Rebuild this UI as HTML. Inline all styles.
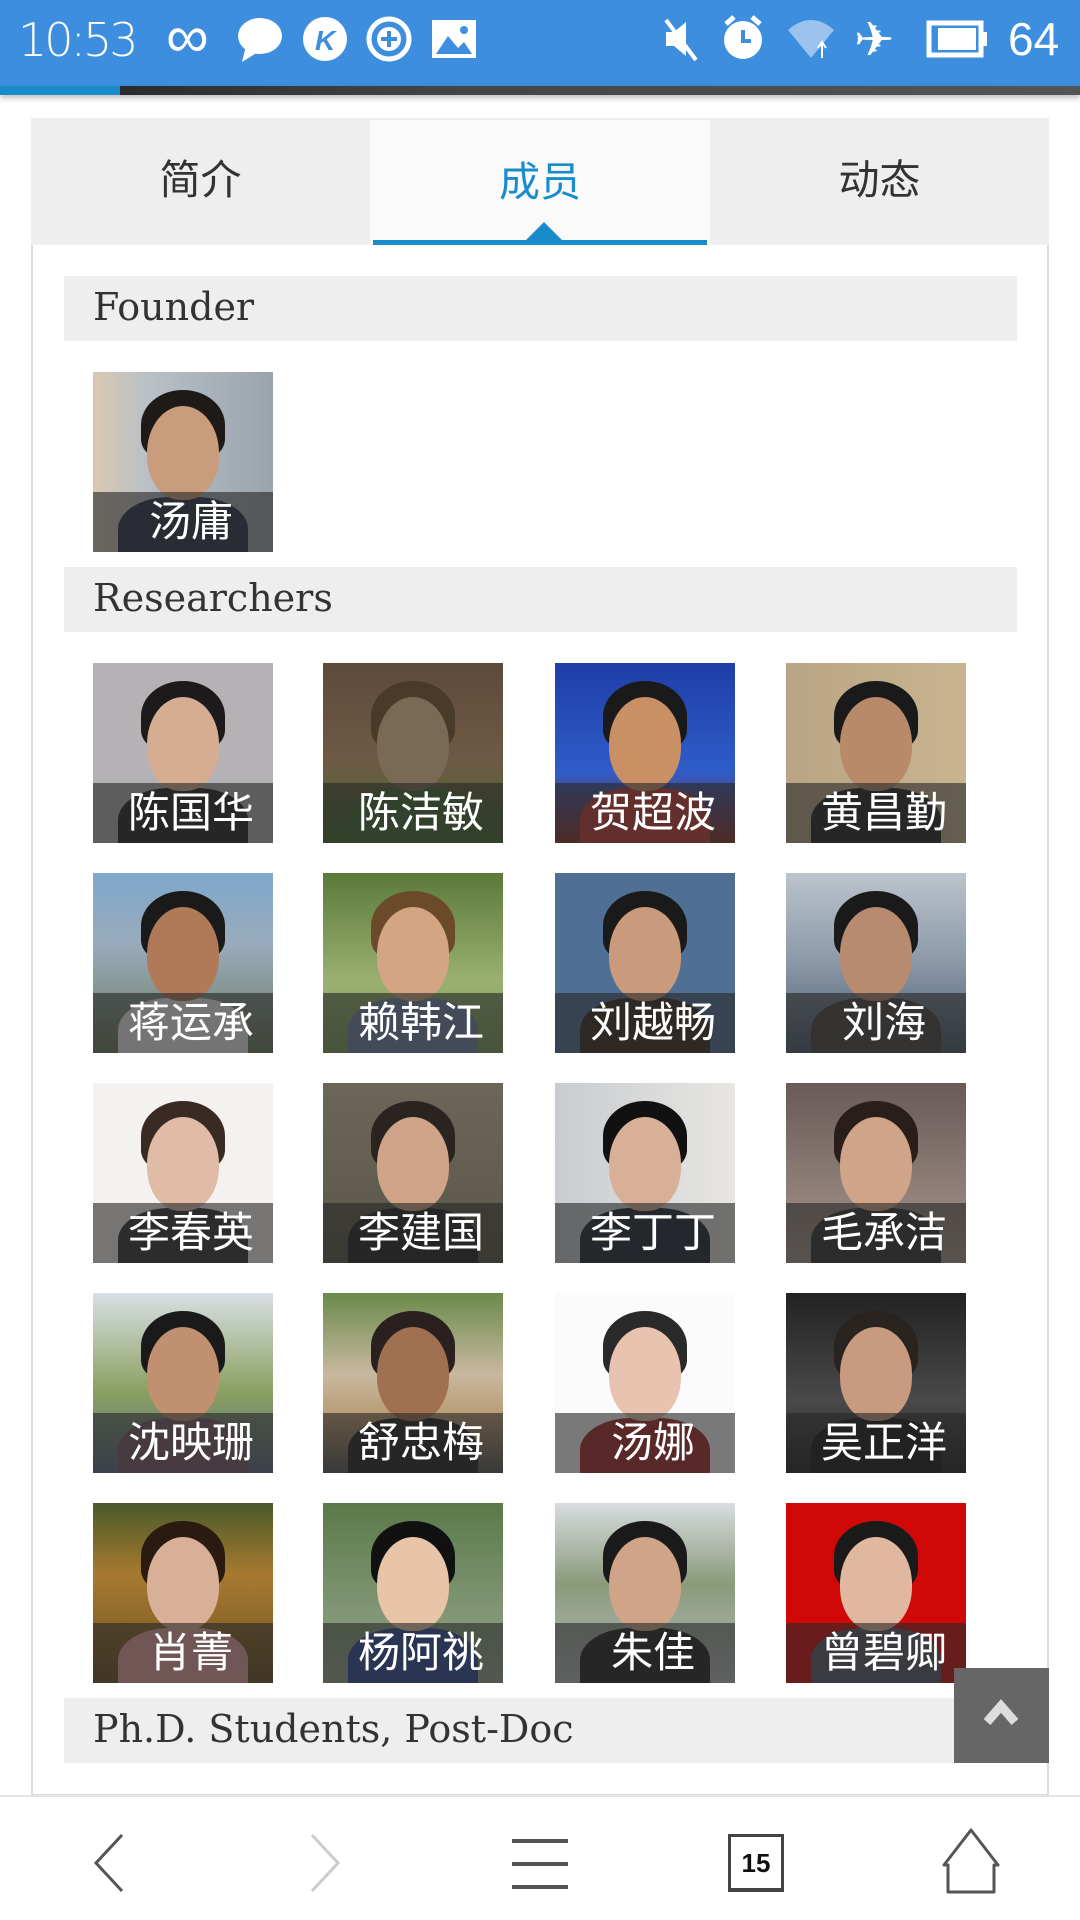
<!DOCTYPE html>
<html><head><meta charset="utf-8"><style>
*{margin:0;padding:0;box-sizing:border-box}
body{width:1080px;height:1920px;background:#fff;position:relative;overflow:hidden;font-family:"Liberation Sans","Noto Sans CJK SC",sans-serif}
.sb{position:absolute;left:0;top:0;width:1080px;height:86px;background:#3d8ede;color:#fff}
.strip{position:absolute;top:86px;left:0;width:1080px;height:9px;background:linear-gradient(90deg,#222,#444 40%,#555);box-shadow:0 3px 6px rgba(0,0,0,.25)}
.strip:before{content:"";position:absolute;left:0;top:0;width:120px;height:9px;background:#1a8ccc}
.tabs{position:absolute;left:31px;top:118px;width:1018px;height:127px;background:#eee}
.tab{position:absolute;top:0;height:127px;font-size:41px;color:#333;text-align:center;line-height:124px}
.act{background:#fafafa;color:#1a8ccc;top:2px;height:125px}
.ul{position:absolute;left:373px;top:240px;width:334px;height:6px;background:#1a8ccc}
.tri{position:absolute;left:526px;top:222px;width:0;height:0;border-left:18px solid transparent;border-right:18px solid transparent;border-bottom:18px solid #1a8ccc}
.panel{position:absolute;left:31px;top:245px;width:1018px;height:1551px;border:2px solid #ddd;border-top:none;background:#fff}
.hd{position:absolute;left:64px;width:953px;height:65px;background:#eee;font-family:"DejaVu Serif","Liberation Serif",serif;font-size:38px;color:#333;padding-left:29px;line-height:62px}
.ph{position:absolute;width:180px;height:180px;overflow:hidden}
.ph .lb{position:absolute;left:0;bottom:0;width:180px;height:60px;background:rgba(40,40,40,.62);color:#fff;font-size:42px;text-align:center;line-height:60px;padding-left:16px}
.ph .head{position:absolute;border-radius:50% 50% 46% 46%}
.ph .hair{position:absolute;border-radius:50% 50% 30% 30%}
.ph .body{position:absolute;border-radius:40% 40% 0 0}
.top{position:absolute;left:954px;top:1668px;width:95px;height:95px;background:#666}
.nav{position:absolute;left:0;top:1795px;width:1080px;height:125px;background:#fff;border-top:2px solid #e4e4e4}
</style></head><body>
<div class="sb">
<div style="position:absolute;left:18px;top:13px;font-size:46px;font-family:'DejaVu Sans','Liberation Sans',sans-serif;font-weight:200;letter-spacing:-3px">10:53</div>
<div style="position:absolute;left:166px;top:2px;font-size:60px">∞</div>
<svg style="position:absolute;left:234px;top:16px" width="50" height="48" viewBox="0 0 50 48"><ellipse cx="26" cy="20" rx="22" ry="18" fill="#fff"/><path d="M12 30 L8 46 L24 36Z" fill="#fff"/></svg>
<svg style="position:absolute;left:302px;top:16px" width="46" height="46"><circle cx="23" cy="23" r="22" fill="#fff"/><text x="13" y="34" font-size="28" font-weight="bold" font-style="italic" fill="#3d8ede" font-family="Liberation Sans">K</text></svg>
<svg style="position:absolute;left:366px;top:16px" width="46" height="46"><circle cx="23" cy="23" r="20" fill="none" stroke="#fff" stroke-width="5"/><circle cx="23" cy="23" r="12" fill="#fff"/><path d="M23 15v16M15 23h16" stroke="#3d8ede" stroke-width="4"/></svg>
<svg style="position:absolute;left:430px;top:18px" width="48" height="42"><rect x="2" y="2" width="44" height="38" fill="#fff"/><path d="M6 36 L18 18 L28 30 L34 24 L42 36Z" fill="#3d8ede"/><circle cx="34" cy="12" r="4" fill="#3d8ede"/></svg>
<svg style="position:absolute;left:662px;top:16px" width="40" height="46"><path d="M4 16h8l12-10v34L12 30H4Z" fill="#fff"/><path d="M4 4 L34 44" stroke="#fff" stroke-width="4"/></svg>
<svg style="position:absolute;left:720px;top:14px" width="46" height="48"><circle cx="23" cy="26" r="19" fill="#fff"/><path d="M23 16v11h8" stroke="#3d8ede" stroke-width="4" fill="none"/><path d="M6 10l8-7M40 10l-8-7" stroke="#fff" stroke-width="5"/></svg>
<svg style="position:absolute;left:786px;top:16px" width="50" height="44"><path d="M2 14 Q25 -6 48 14 L25 42Z" fill="#9cc3ee"/><path d="M36 26v16M32 32l4-6 4 6" stroke="#fff" stroke-width="2" fill="none"/></svg>
<div style="position:absolute;left:854px;top:12px;font-size:48px">✈</div>
<svg style="position:absolute;left:926px;top:20px" width="62" height="38"><rect x="3" y="3" width="52" height="32" fill="none" stroke="#fff" stroke-width="5"/><rect x="12" y="8" width="38" height="22" fill="#fff"/><rect x="56" y="12" width="5" height="14" fill="#fff"/></svg>
<div style="position:absolute;left:1008px;top:12px;font-size:46px">64</div>
</div>
<div class="strip"></div>

<div class="tabs">
<div class="tab" style="left:0;width:339px">简介</div>
<div class="tab act" style="left:339px;width:340px">成员</div>
<div class="tab" style="left:679px;width:339px">动态</div>
</div>
<div class="ul"></div><div class="tri"></div>
<div class="panel"></div>

<div class="hd" style="top:276px">Founder</div>
<div class="hd" style="top:567px">Researchers</div>
<div class="hd" style="top:1698px;width:890px">Ph.D. Students, Post-Doc</div>

<div id="g"></div>
<script>
var P=[
["汤庸",93,372,"linear-gradient(90deg,#d8c8b0,#b9c0c6 30%,#9aa4ad)","#c99c7c","#1e1a18","#2c3448"],
["陈国华",93,663,"#b5b2b6","#d6ac92","#1c1a1a","#222"],
["陈洁敏",323,663,"linear-gradient(180deg,#5d4a3a,#6e5a44 55%,#3e6a2c)","#7a6a55","#4a3a2a","#3f6a30"],
["贺超波",555,663,"linear-gradient(180deg,#1e3ea8,#2f5cc8 60%,#8a3020)","#c99066","#1a1a1a","#c03a32"],
["黄昌勤",786,663,"linear-gradient(90deg,#b9a585,#c8b48f)","#b88a6a","#1a1a1a","#222"],
["蒋运承",93,873,"linear-gradient(180deg,#7fa8cc,#9ab 40%,#6a7a5a)","#b07a58","#1a1a1a","#eee"],
["赖韩江",323,873,"linear-gradient(180deg,#5a7a3a,#9ab070 60%,#7a9a5a)","#d4a582","#6b4a2a","#6f85a8"],
["刘越畅",555,873,"#4f6f95","#c99a7c","#1a1a1a","#3a2a22"],
["刘海",786,873,"linear-gradient(180deg,#bcc4cc,#8a98a8 50%,#4a5a6a)","#b88a70","#1a1a1a","#4a4640"],
["李春英",93,1083,"#f4f2f0","#e0bca8","#3a2a24","#333"],
["李建国",323,1083,"linear-gradient(180deg,#6a6658,#5a5648)","#d0a488","#2a2420","#222"],
["李丁丁",555,1083,"linear-gradient(90deg,#c8ccd0,#e8e6e2)","#d8b098","#111","#1e2530"],
["毛承洁",786,1083,"linear-gradient(180deg,#6a5a58,#a8988e)","#d0a488","#2a1e1a","#333"],
["沈映珊",93,1293,"linear-gradient(180deg,#d8e0e4,#8aa060 55%,#5a6a8a)","#c09070","#1a1a1a","#7a5a6a"],
["舒忠梅",323,1293,"linear-gradient(180deg,#6a8a4a,#c8b8a0 45%,#b89a70 70%,#555)","#a07050","#2a2020","#222"],
["汤娜",555,1293,"#fbfbfb","#e8c4b0","#2a2a2a","#a82828"],
["吴正洋",786,1293,"linear-gradient(180deg,#222,#4a4a4a 60%,#222)","#c89a80","#2a2420","#1a1a1a"],
["肖菁",93,1503,"linear-gradient(180deg,#4a5a2a,#a87a30 40%,#6a5020)","#d8b098","#2a1a10","#e8a0a0"],
["杨阿祧",323,1503,"linear-gradient(180deg,#5a7a4a,#9aa890)","#e8c4a8","#111","#2a4a9a"],
["朱佳",555,1503,"linear-gradient(180deg,#d8dce0,#8a9a7a 45%,#b8bcc0)","#d0a488","#1a1a1a","#222"],
["曾碧卿",786,1503,"#d00808","#e0b8a0","#1a1a1a","#555a66"]];
var h="";
P.forEach(function(p){
h+='<div class="ph" style="left:'+p[1]+'px;top:'+p[2]+'px;background:'+p[3]+'">'+
'<div class="body" style="left:25px;top:125px;width:130px;height:80px;background:'+p[6]+'"></div>'+
'<div class="hair" style="left:48px;top:18px;width:84px;height:70px;background:'+p[5]+'"></div>'+
'<div class="head" style="left:54px;top:34px;width:72px;height:94px;background:'+p[4]+'"></div>'+
'<div class="lb">'+p[0]+'</div></div>';});
document.getElementById("g").innerHTML=h;
</script>

<div class="top"><svg width="95" height="95"><path d="M33 54 L47 38 L61 54" stroke="#ddd" stroke-width="9" fill="none"/></svg></div>

<div class="nav">
<svg style="position:absolute;left:88px;top:36px" width="40" height="60"><path d="M34 2 L8 30 L34 58" stroke="#555" stroke-width="3" fill="none"/></svg>
<svg style="position:absolute;left:306px;top:36px" width="40" height="60"><path d="M6 2 L32 30 L6 58" stroke="#ccc" stroke-width="3" fill="none"/></svg>
<svg style="position:absolute;left:510px;top:38px" width="60" height="56"><path d="M2 6h56M2 29h56M2 52h56" stroke="#555" stroke-width="4"/></svg>
<div style="position:absolute;left:728px;top:37px;width:56px;height:58px;border:3px solid #444;border-bottom-width:4px;font-size:26px;font-weight:bold;text-align:center;line-height:52px;color:#111">15</div>
<svg style="position:absolute;left:940px;top:30px" width="62" height="68"><path d="M31 3 L58 38 L54 38 L54 65 L8 65 L8 38 L4 38Z" stroke="#555" stroke-width="3" fill="none" stroke-linejoin="round"/></svg>
</div>
</body></html>
